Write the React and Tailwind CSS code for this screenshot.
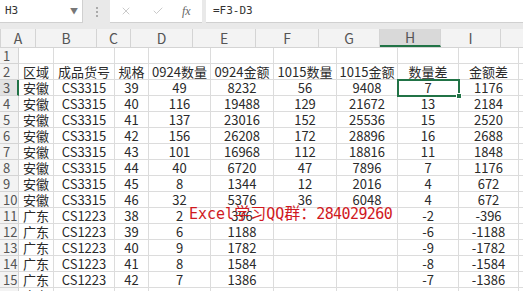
import React from "react";
import { X, Check } from "lucide-react";

const colW = [
  "w-[35px]",
  "w-[61px]",
  "w-[34px]",
  "w-[62px]",
  "w-[63px]",
  "w-[63px]",
  "w-[61px]",
  "w-[61px]",
  "w-[60px]",
  "w-[60px]",
];
const letters = ["A", "B", "C", "D", "E", "F", "G", "H", "I", "J"];

const rows = [
  [],
  ["区域", "成品货号", "规格", "0924数量", "0924金额", "1015数量", "1015金额", "数量差", "金额差"],
  ["安徽", "CS3315", "39", "49", "8232", "56", "9408", "7", "1176"],
  ["安徽", "CS3315", "40", "116", "19488", "129", "21672", "13", "2184"],
  ["安徽", "CS3315", "41", "137", "23016", "152", "25536", "15", "2520"],
  ["安徽", "CS3315", "42", "156", "26208", "172", "28896", "16", "2688"],
  ["安徽", "CS3315", "43", "101", "16968", "112", "18816", "11", "1848"],
  ["安徽", "CS3315", "44", "40", "6720", "47", "7896", "7", "1176"],
  ["安徽", "CS3315", "45", "8", "1344", "12", "2016", "4", "672"],
  ["安徽", "CS3315", "46", "32", "5376", "36", "6048", "4", "672"],
  ["广东", "CS1223", "38", "2", "396", "", "", "-2", "-396"],
  ["广东", "CS1223", "39", "6", "1188", "", "", "-6", "-1188"],
  ["广东", "CS1223", "40", "9", "1782", "", "", "-9", "-1782"],
  ["广东", "CS1223", "41", "8", "1584", "", "", "-8", "-1584"],
  ["广东", "CS1223", "42", "7", "1386", "", "", "-7", "-1386"],
  ["广东", "CS1223", "43", "", "", "", "", "", ""],
];

const cjk = { fontFamily: '"Noto Sans CJK SC", "Noto Sans", sans-serif' };

export default function App() {
  return (
    <div
      className="relative w-[523px] h-[291px] overflow-hidden bg-white text-[#2a2a2a]"
      style={cjk}
    >
      {/* formula bar */}
      <div className="flex h-[29px] bg-[#e9e9e9]">
        <div className="flex items-center justify-between w-[83px] h-[23px] bg-white border-r border-b border-[#d0d0d0] pl-[5px] pr-[4px]">
          <span className="text-[11px] text-[#333] font-['DejaVu_Sans_Mono',monospace]">H3</span>
          <span className="text-[8px] text-[#777]">▼</span>
        </div>
        <div className="flex flex-col items-center justify-center gap-[2px] w-[27px] h-[23px]">
          <span className="w-[2px] h-[2px] bg-[#aaa]"></span>
          <span className="w-[2px] h-[2px] bg-[#aaa]"></span>
          <span className="w-[2px] h-[2px] bg-[#aaa]"></span>
        </div>
        <div className="flex items-center w-[92px] h-[23px] bg-white border-b border-[#d0d0d0]">
          <X className="w-[12px] h-[12px] ml-[10px] text-[#b8b8b8]" strokeWidth={1.5} />
          <Check className="w-[12px] h-[12px] ml-[20px] text-[#b8b8b8]" strokeWidth={1.5} />
          <span className="ml-[18px] text-[12px] italic text-[#666] font-['Liberation_Serif',serif]">fx</span>
        </div>
        <div className="w-[4px]"></div>
        <div className="flex items-center flex-1 h-[23px] bg-white border-b border-[#d0d0d0] pl-[7px]">
          <span className="text-[11px] text-[#333] font-['DejaVu_Sans_Mono',monospace]">=F3-D3</span>
        </div>
      </div>

      {/* column headers */}
      <div className="flex h-[19px] bg-[#f3f3f3] border-b border-[#d4d4d4]">
        <div className="relative w-[19px] border-r border-[#d4d4d4]">
          <div className="absolute right-[2px] bottom-[2px] w-0 h-0 border-l-[9px] border-l-transparent border-b-[9px] border-b-[#c8c8c8]"></div>
        </div>
        {letters.map((l, i) => (
          <div
            key={l}
            className={`${colW[i]} shrink-0 flex items-center justify-center text-[14px] border-r border-[#d4d4d4] ${
              l === "H" ? "bg-[#d9d9d9] border-b-2 border-b-[#217346] text-[#555]" : "text-[#555]"
            }`}
          >
            {l}
          </div>
        ))}
      </div>

      {/* rows */}
      {rows.map((r, ri) => (
        <div key={ri} className="flex h-4">
          <div
            className={`w-[19px] shrink-0 pl-[3px] text-[13px] leading-[15px] text-[#555] border-b border-[#d4d4d4] ${
              ri === 2 ? "bg-[#e2e2e2] border-r-2 border-r-[#217346]" : "bg-[#f3f3f3] border-r border-r-[#d4d4d4]"
            }`}
          >
            {ri + 1}
          </div>
          {colW.map((w, ci) => (
            <div
              key={ci}
              className={`${w} shrink-0 text-center text-[13px] leading-[15px] whitespace-nowrap border-r border-b border-[#dcdcdc]`}
            >
              {r[ci] || ""}
            </div>
          ))}
        </div>
      ))}

      {/* selected cell H3 */}
      <div className="absolute left-[397px] top-[79px] w-[63px] h-[18px] border-2 border-[#217346]">
        <div className="absolute -right-[4px] -bottom-[4px] w-[6px] h-[6px] bg-[#217346] border border-white"></div>
      </div>

      {/* watermark */}
      <div className="absolute left-[189px] top-[202px] flex items-baseline text-[#d0191e] whitespace-nowrap leading-[20px]">
        <span className="text-[15px] font-['DejaVu_Sans_Mono',monospace]">Excel</span>
        <span className="text-[16px]">学习</span>
        <span className="text-[15px] font-['DejaVu_Sans_Mono',monospace]">QQ</span>
        <span className="text-[16px]">群：</span>
        <span className="text-[15px] tracking-[-0.6px] font-['DejaVu_Sans_Mono',monospace]">284029260</span>
      </div>
    </div>
  );
}
